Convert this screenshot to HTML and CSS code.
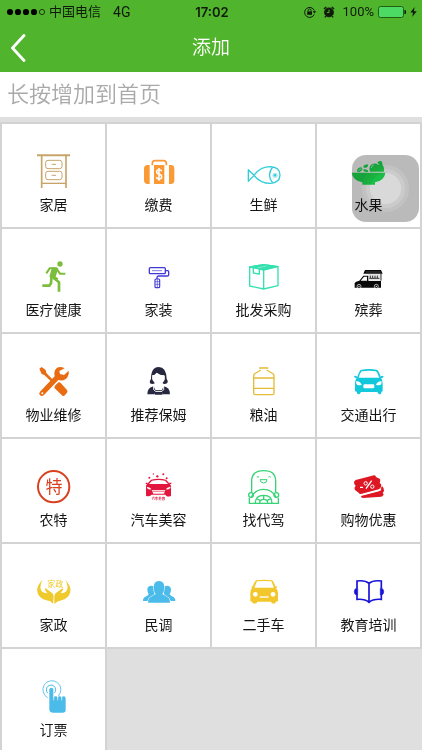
FILE: index.html
```html
<!DOCTYPE html>
<html lang="zh-CN">
<head>
<meta charset="utf-8">
<meta name="viewport" content="width=device-width, initial-scale=1">
<title>添加</title>
<link rel="stylesheet" href="styles.css">
</head>
<body>
<header class="header">
  <div class="status">
    <div class="status-side">
      <svg class="signal" viewBox="0 0 38 8" aria-hidden="true"><circle cx="3" cy="4" r="3.1"/><circle cx="11" cy="4" r="3.1"/><circle cx="19" cy="4" r="3.1"/><circle cx="27" cy="4" r="3.1"/><circle cx="35" cy="4" r="2.6" fill="none" stroke="#101a0c" stroke-width=".8"/></svg>
      <span>中国电信</span>
      <span class="network">4G</span>
    </div>
    <time class="clock">17:02</time>
    <div class="status-side status-end">
      <svg class="lock" viewBox="0 0 14 12" fill="none" stroke="#101a0c" aria-hidden="true"><path d="M11.2 8.5A5 5 0 1 1 11.3 4.6" stroke-width="1"/><path d="M9.6 5.2h3.6l-1.8 2.4z" fill="#101a0c" stroke="none"/><rect x="4.2" y="5.4" width="4.8" height="3.4" fill="#101a0c" stroke="none"/><path d="M5.2 5.5V4.4a1.4 1.4 0 0 1 2.8 0v1.1" stroke-width=".9"/></svg>
      <svg class="alarm" viewBox="0 0 12 12" fill="none" stroke="#101a0c" aria-hidden="true"><circle cx="6" cy="6.4" r="4.4" fill="#101a0c"/><path d="M1 3 3.2 1M11 3 8.8 1M2.8 10.2 2 11.4M9.2 10.2l.8 1.2" stroke-width="1.5"/><path d="M6 3.6v3H3.8" stroke="#50b42c"/></svg>
      <span>100%</span>
      <svg class="battery" viewBox="0 0 28 12" aria-hidden="true"><rect x=".5" y=".5" width="25" height="11" rx="2" fill="#4cd964" stroke="#226016"/><path d="M26.4 4a2 2 0 0 1 0 4z" fill="#101a0c"/></svg>
      <svg class="bolt" viewBox="0 0 7 10" fill="#101a0c" aria-hidden="true"><path d="M4.6 0 .3 5.6H3L2.2 10l4.5-5.8H3.9z"/></svg>
    </div>
  </div>
  <nav class="nav">
    <button class="back" type="button" aria-label="返回"><svg viewBox="0 0 16 28" fill="none" stroke="#fff" stroke-width="2.8" stroke-linecap="round" stroke-linejoin="round"><path d="M14 1.5 2.5 14 14 26.5"/></svg></button>
    <h1 class="title">添加</h1>
  </nav>
</header>
<p class="hint">长按增加到首页</p>
<main class="grid">
  <button class="tile" type="button">
    <svg class="icon" viewBox="107 99 108 108" fill="none" stroke="#c8a468" stroke-width="3" aria-hidden="true"><path d="M110 106h99" stroke-width="6"/><path d="M124 108v96M197 108v96" stroke-width="5"/><path d="M124 190h73" stroke-width="4"/><rect x="136" y="121" width="49" height="25" rx="7"/><rect x="136" y="154" width="49" height="25" rx="7"/><path d="M154 133h13M154 166h13"/></svg>
    <span>家居</span>
  </button>
  <button class="tile" type="button">
    <svg class="icon" viewBox="422 99 108 108" fill="#fb9a35" aria-hidden="true"><path d="M448 135v57h-6q-11 0-11-11v-35q0-11 11-11zM506 135v57h6q10 0 10-11v-35q0-11-10-11zM461 135h31v57h-31z"/><path d="M456 136v-6q0-8 8-8h26q8 0 8 8v6" fill="none" stroke="#fb9a35" stroke-width="5"/><path d="M484 154q-2-5-8-5-7 0-7 6t7 7q8 2 8 9 0 6-8 6-6 0-8-6M476 144v38" fill="none" stroke="#fff" stroke-width="4.5"/></svg>
    <span>缴费</span>
  </button>
  <button class="tile" type="button">
    <svg class="icon" viewBox="104 99 108 108" fill="none" stroke="#31cdda" stroke-width="4" stroke-linejoin="round" aria-hidden="true"><path d="M128 166q19-26 49-26 29 2 29 25t-29 25q-30 0-49-24L111 149v35zM184 141q-19 24 0 48"/><circle cx="191" cy="166" r="4" fill="#31cdda" stroke="none"/><circle cx="191" cy="166" r="6.5" stroke-width="1.5"/></svg>
    <span>生鲜</span>
  </button>
  <button class="tile" type="button">
    <svg class="icon" viewBox="419 99 108 108" fill="#1fe050" aria-hidden="true"><path d="M421 158h101q-2 23-31 29v7h-38v-7q-29-6-32-29zM476 155q-6-20 10-24 8-2 14 3l11-3q10 10 6 24zM498 128q2-6 12-5l4 9q-11 3-16-4zM456 142q-1-7 12-9 5 5-1 9-5 3-11 0z"/><ellipse cx="445" cy="149" rx="9" ry="6" transform="rotate(-35 445 149)"/><ellipse cx="463" cy="152" rx="8" ry="3.5" transform="rotate(15 463 152)"/><path d="M480 144q1-8 8-9M441 152l9-6" fill="none" stroke="#fff" stroke-width="2"/></svg>
    <span>水果</span>
  </button>

  <button class="tile" type="button">
    <svg class="icon" viewBox="107 90 108 108" fill="none" stroke="#7cbe3c" stroke-width="6" aria-hidden="true"><circle cx="179" cy="108" r="8" fill="#7cbe3c" stroke="none"/><path d="M138 136 148 121H168L179 137H195"/><path d="m155 118 19 3-8 25 8 5-7 8-20-13z" fill="#7cbe3c" stroke="none"/><path d="M154 140 152 166 147 173H126M160 149 176 163V191" stroke-width="8"/></svg>
    <span>医疗健康</span>
  </button>
  <button class="tile" type="button">
    <svg class="icon" viewBox="422 90 108 108" fill="none" stroke="#403bd8" stroke-width="4" aria-hidden="true"><rect x="447" y="119" width="48" height="18" rx="3"/><path d="M455 128h30" stroke-width="2"/><path d="M495 128h7q3 0 3 3v9q0 4-4 4h-26q-5 0-5 5v4"/><rect x="464" y="153" width="14" height="26" rx="3" stroke-width="3.5"/><path d="M465 161h12M465 169h12M471 154v24" stroke-width="2"/></svg>
    <span>家装</span>
  </button>
  <button class="tile" type="button">
    <svg class="icon" viewBox="104 90 108 108" fill="none" stroke="#36e0b0" stroke-width="4" stroke-linejoin="round" aria-hidden="true"><path d="m115 117 42-7 43 6v57l-43 10-42-9z"/><path d="m115 117 42-7 43 6-43 10z" fill="#36e0b0"/><path d="M157 124v59M126 120v15l18 3v-16"/><path d="m138 120 28-6" stroke="#fff" stroke-width="1"/></svg>
    <span>批发采购</span>
  </button>
  <button class="tile" type="button">
    <svg class="icon" viewBox="419 90 108 108" fill="#080808" aria-hidden="true"><path d="M456 137 461 126H509L514 137zM430 179v-14q2-4 14-7l12-15h16v16h37v20z"/><path d="m448 158 10-12h9v12z" fill="#fff"/><path d="M471 138h38v20h-38z" fill="#e2e2e2"/><path d="M477 150v-7M484 150v-7M491 150v-7M498 150v-7M474 151h30M509 138v20" fill="none" stroke="#333" stroke-width="3"/><path d="M464 132h44" stroke="#777" stroke-width="1.5"/><circle cx="443" cy="175" r="6" stroke="#fff" stroke-width="2"/><circle cx="495" cy="175" r="6" stroke="#fff" stroke-width="2"/><circle cx="443" cy="175" r="2" fill="#fff"/><circle cx="495" cy="175" r="2" fill="#fff"/></svg>
    <span>殡葬</span>
  </button>

  <button class="tile" type="button">
    <svg class="icon" viewBox="107 90 108 108" fill="#e96c12" aria-hidden="true"><path d="m117 107 7-5 12 9 2 9 21 22-5 5-22-21-8-3z"/><path d="m165 157 10-9q3-1 6 2l19 21q3 4 0 8l-8 9q-4 2-8-2l-21-20q-2-3 0-5z"/><path d="M193 106q-20-10-29 6-4 8-1 18l-44 46q-5 6 0 11 6 4 12-1l43-45q19 5 28-10 5-8 3-18l-14 13-12-3-2-9z"/><circle cx="126" cy="181" r="3" fill="#fff"/></svg>
    <span>物业维修</span>
  </button>
  <button class="tile" type="button">
    <svg class="icon" viewBox="422 90 108 108" fill="#27273f" aria-hidden="true"><path d="M449 151q-3-7 3-13 0-36 23-36t24 36q6 7 1 13-8 5-14-1l7-10-1-13q-15 1-23-8-5 8-13 8v13l8 10q-7 6-15 1z"/><path d="M456 127v8q2 17 19 18 17-1 18-18v-7q-15-1-23-8-5 7-14 7z" fill="#fff"/><path d="M441 184q0-21 19-24l5 11h20l5-11q19 3 19 24h-21l-4-8h-18l-4 8z"/><path d="M460 158v12l6 5h19l5-5v-12" fill="none" stroke="#fff" stroke-width="3"/><rect x="463" y="177" width="24" height="8" rx="2"/></svg>
    <span>推荐保姆</span>
  </button>
  <button class="tile" type="button">
    <svg class="icon" viewBox="104 90 108 108" fill="none" stroke="#e4bd38" stroke-width="4" stroke-linejoin="round" aria-hidden="true"><path d="M143 105h28M148 111 129 123q-2 2-2 5v52q0 5 5 5h51q5 0 5-5v-52q0-3-2-5l-20-12M127 135h61M127 166h61"/></svg>
    <span>粮油</span>
  </button>
  <button class="tile" type="button">
    <svg class="icon" viewBox="419 90 108 108" fill="#12c9dc" aria-hidden="true"><path d="M437 134q6-18 11-23 25-6 50 0 6 6 11 23 5 6 5 19v22q-2 2-4 1v5q-2 4-8 2l-4-6h-49l-4 6q-6 2-8-2v-5q-3 1-6-2v-21q0-14 6-19z"/><path d="M428 130q4-5 10 2l-2 4q-6 0-8-6zM517 130q-4-5-10 2l3 4q5 0 7-6z"/><path d="M442 134q4-14 9-19 21-4 43 0 5 4 10 19z" fill="#fff"/><path d="M434 145q13-1 17 11-13 3-16-3zM511 145q-13-1-17 11 13 3 16-3z" fill="#fff"/><rect x="456" y="154" width="33" height="12" rx="4" fill="#fff"/></svg>
    <span>交通出行</span>
  </button>

  <button class="tile" type="button">
    <svg class="icon" viewBox="107 90 108 108" aria-hidden="true"><circle cx="160" cy="146" r="47" fill="none" stroke="#d9401e" stroke-width="6"/><text class="seal" x="161" y="165" text-anchor="middle">特</text></svg>
    <span>农特</span>
  </button>
  <button class="tile" type="button">
    <svg class="icon" viewBox="422 90 108 108" fill="#e3173d" aria-hidden="true"><path d="m441 137 11-12q22-5 45 0l11 12q5 4 4 9v27q-6 5-14 1l-3-4h-41q-8 8-17 3v-27q-1-6 4-9z"/><path d="m446 138 9-10q20-4 39 0l9 10z" fill="#fff"/><path d="M439 146q12 2 14 8-12 2-14-8zM511 146q-12 2-14 8 12 2 14-8z" fill="#fff"/><path d="M454 156h41l-4 11h-32z" fill="#fff"/><path d="M455 160h39" stroke="#f38a9b" stroke-width="4"/><path d="M436 134h6v4h-6zM507 134h6v4h-6z"/><g><circle cx="447" cy="119" r="3"/><circle cx="459" cy="108" r="2"/><circle cx="471" cy="115" r="3.5"/><circle cx="489" cy="109" r="3"/><circle cx="499" cy="121" r="3"/></g><text class="caption" x="474" y="185" text-anchor="middle">汽车美容</text></svg>
    <span>汽车美容</span>
  </button>
  <button class="tile" type="button">
    <svg class="icon" viewBox="104 90 108 108" fill="none" stroke="#36d475" stroke-width="4" aria-hidden="true"><path d="M121 163v-34q0-31 36-31t36 31v34M114 179v17h87v-17M119 179q12-25 38-25t38 25M132 195q0-23 25-23t25 23M145 195q0-11 12-11t12 11M136 182l12 6M178 182l-12 6M157 172v12"/><circle cx="119" cy="171" r="7"/><circle cx="195" cy="171" r="7"/><path d="M146 125h21q0 10-10 10t-11-10z" stroke-width="3"/><path d="M136 117q4-3 7 1M171 117q4-3 7 1" stroke-width="3"/></svg>
    <span>找代驾</span>
  </button>
  <button class="tile" type="button">
    <svg class="icon" viewBox="419 90 108 108" fill="#dd1724" aria-hidden="true"><path d="M433 126 488 112q5-1 6 5l12 6q2 6-1 12 6 3 5 9l-2 8-59 16q-5 1-7-4l-11-8q-4-7 2-13-6-6-5-12z"/><path d="m449 174 54-14q9-3 6-11l4-4q5 6 5 12 0 5-4 8l3 4q-1 6-7 7l-55 4q-6 0-6-6z"/><path d="m448 171 54-14q6-2 5-8" fill="none" stroke="#fff" stroke-width="3"/><path d="M446 148h9M464 152 481 128" stroke="#fff" stroke-width="4"/><circle cx="463" cy="136" r="5" fill="none" stroke="#fff" stroke-width="3"/><circle cx="483" cy="146" r="5" fill="none" stroke="#fff" stroke-width="3"/></svg>
    <span>购物优惠</span>
  </button>

  <button class="tile" type="button">
    <svg class="icon" viewBox="107 90 108 108" fill="#efca2d" aria-hidden="true"><path d="M127 110q-25 24-12 47 8 13 35 18l8 8 2-22q0-10-10-15l-14-10-3 3 8 12q-16 0-20-13-3-14 6-28zM194 110q25 24 12 47-8 13-33 18l-11 8v-22q0-10 10-15l14-10 3 3-8 12q16 0 20-13 3-14-7-28z"/><text class="house" x="165" y="131" text-anchor="middle">家政</text></svg>
    <span>家政</span>
  </button>
  <button class="tile" type="button">
    <svg class="icon" viewBox="422 90 108 108" fill="#4bbbe9" aria-hidden="true"><path d="M428 174q-1-11 12-15l5-5q-4-5-4-15 1-11 12-11 9 0 10 6v15l-3 9-12 6-6 10zM525 174q1-11-12-15l-5-5q4-5 4-15-1-11-12-11-9 0-10 6v15l3 9 12 6 6 10z"/><path d="M443 179q0-16 13-20l10-6q-5-6-6-17-1-22 16-22t16 22q-1 11-6 17l10 6q13 4 13 20z" stroke="#fff" stroke-width="3" paint-order="stroke"/></svg>
    <span>民调</span>
  </button>
  <button class="tile" type="button">
    <svg class="icon" viewBox="104 90 108 108" fill="#f2c72c" aria-hidden="true"><path d="M122 136q7-19 12-24 24-3 49 0 5 5 11 24 6 5 6 14v24q-1 2-7 2v3q-6 5-13 0v-3h-43v3q-7 5-14 0v-3q-6 0-6-2v-24q0-10 5-14z"/><path d="M120 131q4-3 8 0v5q-7 1-8-5zM198 131q-4-3-8 0v5q7 1 8-5z"/><path d="m129 134 8-19q21-2 43 0l8 19z" fill="#fff"/><circle cx="132" cy="154" r="7" fill="#fff"/><circle cx="185" cy="154" r="7" fill="#fff"/><path d="M145 162h27" stroke="#fff" stroke-width="4"/></svg>
    <span>二手车</span>
  </button>
  <button class="tile" type="button">
    <svg class="icon" viewBox="419 90 108 108" fill="none" stroke="#1713d8" stroke-width="5" aria-hidden="true"><path d="M437 136V114q24-3 36 7 12-10 37-7v22M437 156v13q24-2 36 9 12-11 37-9v-13M473 121v57"/><path d="M439 136v20h-4q-6-2-6-10t6-10zM507 136v20h4q6-2 6-10t-6-10z" fill="#1713d8" stroke-width="2"/></svg>
    <span>教育培训</span>
  </button>

  <button class="tile" type="button">
    <svg class="icon" viewBox="107 405 108 108" fill="none" stroke="#4bbbe9" aria-hidden="true"><path d="M142 464a27 27 0 1 1 32-5" stroke-width="2.5"/><path d="M142 450a14 14 0 1 1 20 0" stroke-width="3"/><path d="M147 499v-60q1-5 6-5t6 5v25q2-4 7-4t6 4q2-4 6-4t6 4q2-4 6-4 6 0 6 7v34q0 8-9 8h-30q-10 0-10-10z" fill="#4bbbe9" stroke="none"/><path d="M160 460v12M172 461v11M184 461v11" stroke="#fff" stroke-width="2"/></svg>
    <span>订票</span>
  </button>
</main>
<button class="assist" type="button" aria-label="辅助触控"></button>
</body>
</html>
```
FILE: styles.css
```css
* {
  box-sizing: border-box;
}

html {
  scrollbar-width: none;
}

body {
  position: relative;
  margin: 0;
  background: #dfdfdf;
  color: #151515;
  font-family: Roboto, "Noto Sans CJK SC", sans-serif;
}

button {
  margin: 0;
  padding: 0;
  border: 0;
  background: none;
  color: inherit;
  font: inherit;
}

svg {
  display: block;
  flex: none;
}

.header {
  background: #50b42c;
}

.status {
  display: flex;
  align-items: center;
  height: 24px;
  padding: 0 5px 0 7px;
  color: #101a0c;
  font-size: 13px;
  line-height: 24px;
}

.status-side {
  display: flex;
  flex: 1;
  align-items: center;
  gap: 4px;
}

.status-end {
  justify-content: flex-end;
}

.signal {
  width: 38px;
  height: 8px;
}

.network {
  margin-left: 8px;
  font-size: 14px;
}

.clock {
  font-family: Inter, sans-serif;
  font-weight: 600;
}

.lock {
  width: 14px;
  height: 12px;
  margin-right: 2px;
}

.alarm {
  width: 12px;
  height: 12px;
  margin-right: 4px;
}

.battery {
  width: 28px;
  height: 12px;
}

.bolt {
  width: 7px;
  height: 10px;
}

.nav {
  display: grid;
  grid-template-columns: 48px 1fr 48px;
  align-items: center;
  height: 48px;
}

.back {
  height: 48px;
  padding-left: 10px;
}

.back svg {
  width: 16px;
  height: 28px;
}

.title {
  margin: 0;
  color: #fff;
  font-size: 19px;
  font-weight: 350;
  line-height: 48px;
  text-align: center;
}

.hint {
  margin: 0;
  padding: 0 7px;
  background: #fff;
  color: #a9a9a9;
  font-size: 22px;
  font-weight: 350;
  line-height: 45px;
}

.grid {
  display: grid;
  grid-template-columns: repeat(4, 1fr);
  gap: 2px;
  padding: 7px 2px 0;
}

.tile {
  display: flex;
  flex-direction: column;
  align-items: center;
  gap: 6px;
  height: 103px;
  padding-top: 29px;
  background: #fff;
  box-shadow: 0 0 0 2px #d3d3d3;
  font-size: 14px;
  line-height: 20px;
}

.icon {
  width: 36px;
  height: 36px;
}

.seal {
  fill: #d9401e;
  font-size: 51px;
}

.caption {
  fill: #e3173d;
  font-size: 10px;
  font-weight: 700;
}

.house {
  fill: #efca2d;
  font-size: 24px;
}

.assist {
  position: absolute;
  top: 155px;
  right: 3px;
  width: 67px;
  height: 67px;
  border-radius: 14px;
  background: radial-gradient(circle, #d9d9d9 0 15px, #cbcbcb 16px 19px, #c2c2c2 20px 23px, #bababa 24px);
  mix-blend-mode: multiply;
}
```
